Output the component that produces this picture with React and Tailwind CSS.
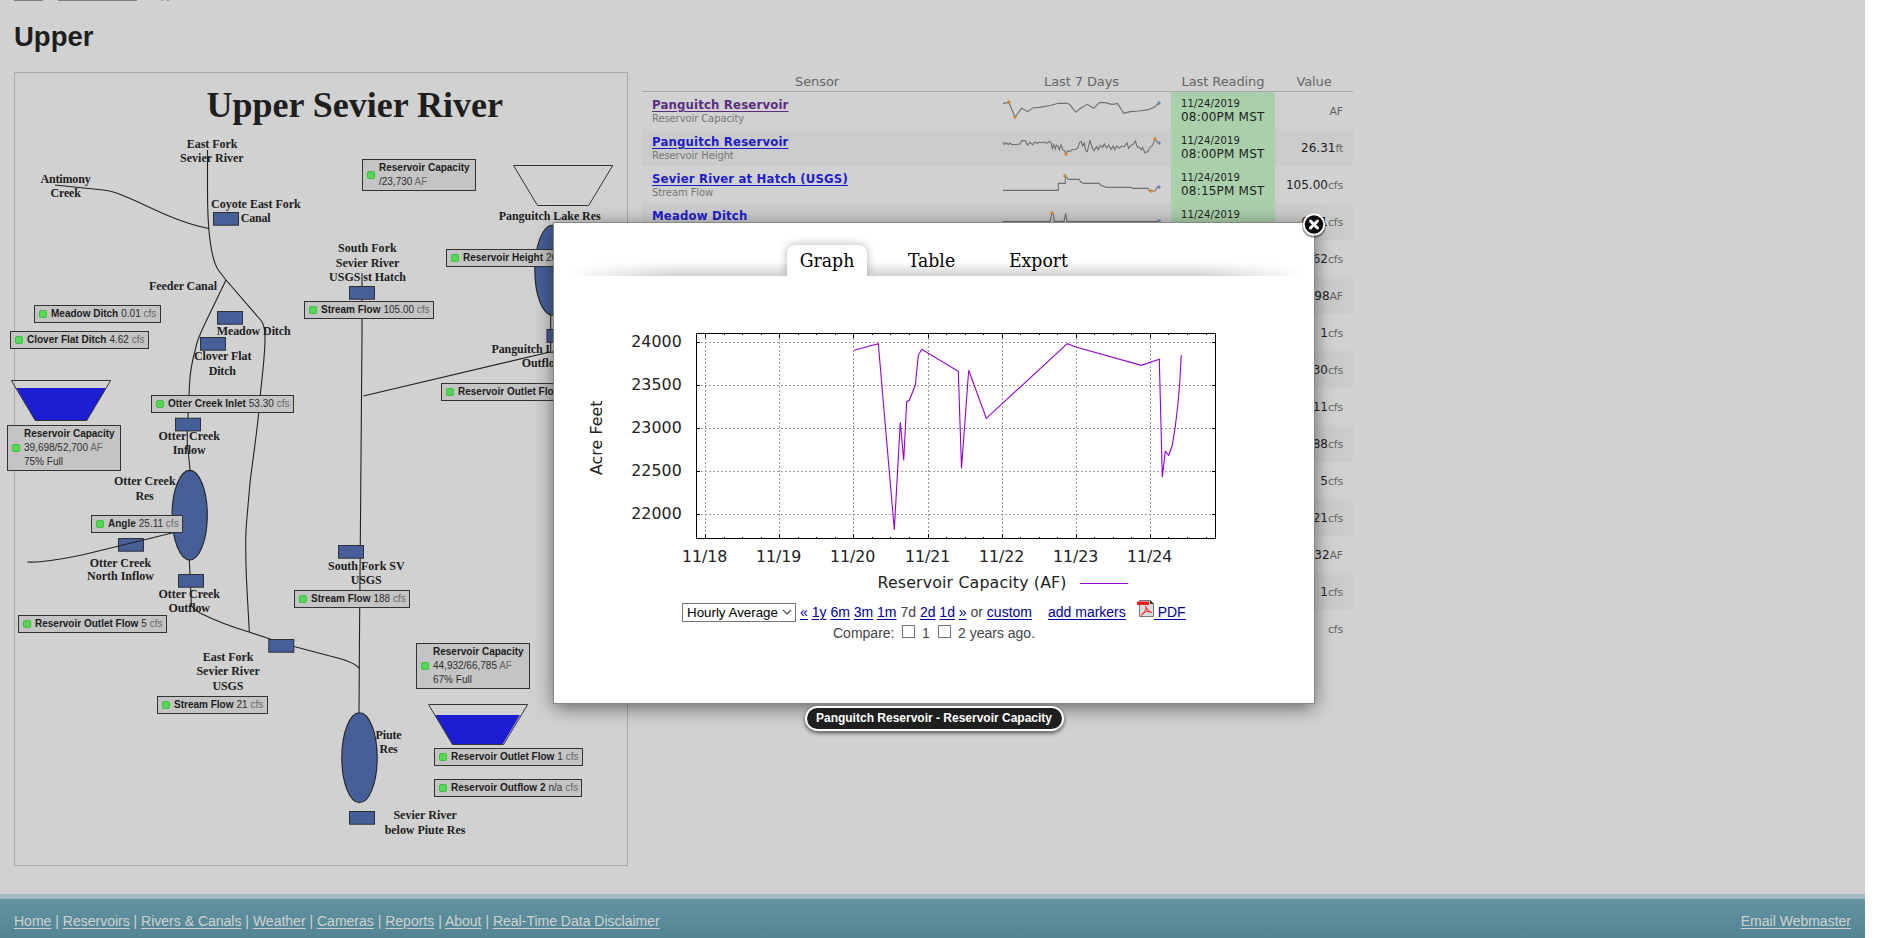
import React from 'react';

const MAP_TEXTS = [
  ['East Fork', 187, 148, 50.7], ['Sevier River', 180.3, 162.3, 63.7],
  ['Antimony', 40.7, 183, 50.3], ['Creek', 50.7, 197.3, 30.6],
  ['Coyote East Fork', 211.4, 207.6, 89.6], ['Canal', 241, 222, 30],
  ['Feeder Canal', 149.3, 290.3, 68], ['Meadow Ditch', 217, 335, 74],
  ['Clover Flat', 194.3, 360.4, 57.4], ['Ditch', 209, 375, 27.3],
  ['Otter Creek', 158.7, 439.5, 61.6], ['Inflow', 173, 453.7, 33],
  ['Otter Creek', 114.3, 485.3, 61.6], ['Res', 135.7, 499.7, 18.3],
  ['Otter Creek', 90, 566.7, 61.6], ['North Inflow', 87.3, 580, 67],
  ['Otter Creek', 158.7, 597.5, 61.6], ['Outflow', 168.7, 611.5, 41.6],
  ['East Fork', 203, 660.7, 50.7], ['Sevier River', 196.7, 675, 63.4], ['USGS', 212.7, 689.5, 31],
  ['Panguitch Lake Res', 499, 220.3, 102],
  ['South Fork', 338.3, 252.3, 58.7], ['Sevier River', 336, 267, 63.7],
  ['USGS', 329.3, 281.3, 31.5], ['st Hatch', 363.6, 281.3, 42.6],
  ['Panguitch Lake', 491.7, 352.7, 80], ['Outflow', 522, 367.3, 41.6],
  ['South Fork SV', 328.3, 569.7, 76.7], ['USGS', 351, 584, 31],
  ['Piute', 375.7, 739, 26.3], ['Res', 379.7, 753, 18.3],
  ['Sevier River', 393.7, 819.3, 63.5], ['below Piute Res', 385, 834, 80.7],
];

const GAUGES = [
  [213.5, 212.5], [349.5, 286.5], [217.5, 311.5], [200.5, 337.5], [175.5, 418.2], [118.5, 538.5],
  [178.5, 574.5], [268.8, 639.5], [338.5, 545.5], [349.5, 811.5], [547, 329.5],
];

// x and y are page coordinates; MapLabel shifts them to the panel's inner corner
const LABELS = [
  { x: 34, y: 305, w: 127, name: 'Meadow Ditch', value: '0.01', unit: 'cfs' },
  { x: 10, y: 331, w: 139, name: 'Clover Flat Ditch', value: '4.62', unit: 'cfs' },
  { x: 151, y: 395, w: 143, name: 'Otter Creek Inlet', value: '53.30', unit: 'cfs' },
  { x: 7, y: 425, w: 114, h: 46, name: 'Reservoir Capacity', value: '39,698/52,700', unit: 'AF', full: '75% Full' },
  { x: 91, y: 515, w: 92, name: 'Angle', value: '25.11', unit: 'cfs' },
  { x: 18, y: 615, w: 149, name: 'Reservoir Outlet Flow', value: '5', unit: 'cfs' },
  { x: 157, y: 696, w: 111, name: 'Stream Flow', value: '21', unit: 'cfs' },
  { x: 362, y: 159, w: 114, h: 32, name: 'Reservoir Capacity', value: '/23,730', unit: 'AF' },
  { x: 304, y: 301, w: 130, name: 'Stream Flow', value: '105.00', unit: 'cfs' },
  { x: 446, y: 249, w: 138, name: 'Reservoir Height', value: '26.31', unit: 'ft' },
  { x: 441, y: 383, w: 149, name: 'Reservoir Outlet Flow', value: '1', unit: 'cfs' },
  { x: 294, y: 590, w: 116, name: 'Stream Flow', value: '188', unit: 'cfs' },
  { x: 416, y: 643, w: 114, h: 46, name: 'Reservoir Capacity', value: '44,932/66,785', unit: 'AF', full: '67% Full' },
  { x: 434, y: 748, w: 149, name: 'Reservoir Outlet Flow', value: '1', unit: 'cfs' },
  { x: 434, y: 779, w: 148, name: 'Reservoir Outflow 2', value: 'n/a', unit: 'cfs' },
];

function MapLabel({ x, y, w, h = 18, name, value, unit, full }) {
  const stacked = h > 18;
  return (
    <div
      className="absolute flex items-center border border-[#333] bg-[#c4c4c4] pl-1 font-['Liberation_Sans',sans-serif] text-[10px] leading-[14px] whitespace-nowrap text-[#2c2c2c]"
      style={{ left: x - 15, top: y - 73, width: w, height: h }}
    >
      <span className="mr-1 h-2 w-2 shrink-0 rounded-[2px] border border-[#3cc040] bg-[#55d858]" />
      <div className={stacked ? 'flex flex-col' : 'flex gap-[3px]'}>
        <b className="text-[#1c1c1c]">{name}</b>
        <span>{value} <span className="text-[#686868]">{unit}</span></span>
        {full && <span>{full}</span>}
      </div>
    </div>
  );
}

function RiverMap() {
  return (
    <div className="relative h-[794px] w-[614px] shrink-0 border border-[#a9a9a9]">
      <svg className="absolute -top-px -left-px overflow-visible" width="614" height="794" viewBox="14 72 614 794">
        <g fill="none" stroke="#222" strokeWidth="1.1">
          <path d="M207.5 150V190C207.5 210 209 235 211 247C213 259 216 267 219 271L226 280L261 320.5Q265 325 265 338C265 362 260 390 258.7 413C256 440 252 465 250 483L246.5 523C245.5 535 245.5 555 246.5 580L249.3 632" />
          <path d="M226 280L206.7 320Q197 340 196 347Q190 368 189.5 385L188 417Q187 432 187.3 447Q189 456 190 470" />
          <path d="M189.3 560L190 574L191.3 605Q193 609 200 613Q222 624 249 632L270 639L295 646.7L330 656Q355 662 359.5 668.5" />
          <path d="M55 185L103.3 190Q113 191 124 196C145 204 175 222 209 228.5" />
          <path d="M362 273V337L361.3 420L360.5 520L359.5 633L359 713" />
          <path d="M363.3 396L550 352M550.7 315V352" />
        </g>
        {GAUGES.map(([x, y]) => (
          <rect key={`${x}-${y}`} x={x} y={y} width="25" height="12.7" fill="#475f99" stroke="#2c3038" />
        ))}
        <g fill="#475f99" stroke="#222" strokeWidth="1.1">
          <ellipse cx="189.7" cy="515.2" rx="17.6" ry="44.8" />
          <ellipse cx="359.5" cy="757.8" rx="17.7" ry="45" />
          <ellipse cx="552.5" cy="270.2" rx="17.7" ry="45" />
        </g>
        <path d="M27.3 562Q43 563 83 554.7L118 546.3L173 532.7" fill="none" stroke="#222" strokeWidth="1.1" />
        <path d="M16.3 388H106L87 420.5H35Z" fill="#1d1dd2" />
        <path d="M435 715H520L502.5 744.5H452.5Z" fill="#1d1dd2" />
        <g fill="none" stroke="#333" strokeWidth="1">
          <path d="M11.3 380.5H110.7L86.7 420.5H35.3Z" />
          <path d="M513.5 165.5H612.7L588.7 205.5H537.5Z" />
          <path d="M428.5 704.5H527.7L503.5 744.5H452.5Z" />
        </g>
        <g className="font-['Liberation_Serif',serif] font-bold" fill="#1e1e1e">
          <text x="206.5" y="117" fontSize="36" textLength="296.5">Upper Sevier River</text>
          {MAP_TEXTS.map(([t, x, y, w]) => (
            <text key={`${t}-${x}-${y}`} x={x - 0.3} y={y} fontSize="12" textLength={w}>{t}</text>
          ))}
        </g>
      </svg>
      {LABELS.map((l) => <MapLabel key={`${l.x}-${l.y}`} {...l} />)}
    </div>
  );
}

const SPARKS = [
  {
    box: '69 96 471 111',
    line: '69,130 82,128 86,126 105,171 125,145 143,155 160,143 178,142 213,136 235,130 258,130 269,133 287,157 303,144 322,133 341,145 358,128 377,128 395,133 413,131 431,160 450,155 478,153 505,149 525,140 537,129',
    hot: [[87, 126], [105, 171]],
    end: [537, 129],
  },
  {
    box: '69 207 471 111',
    line: '69,247 74,253 79,248 85,254 90,249 96,254 112,253 120,252 126,242 136,242 142,255 150,247 158,254 165,246 172,250 178,246 186,248 194,246 200,250 209,244 214,250 217,266 221,254 226,267 229,255 234,258 238,270 243,254 248,268 253,272 258,281 263,272 270,275 276,269 287,268 293,265 299,247 304,244 308,258 313,249 317,272 322,275 330,240 336,262 342,272 350,260 355,269 361,256 368,262 373,252 380,264 386,255 393,268 400,258 404,269 410,258 418,264 425,258 433,260 441,249 446,265 453,256 460,252 466,243 472,261 478,262 484,270 488,262 495,279 504,274 510,262 517,257 525,237 530,245 537,249',
    hot: [[258, 282], [525, 237]],
    end: [537, 249],
  },
  {
    box: '69 318 471 111',
    line: '69,391 235,391 235,370 256,370 256,348 265,358 298,358 302,366 312,370 358,370 362,376 378,382 452,382 458,385 504,385 508,393 525,393 530,383 537,381',
    hot: [[255, 348], [513, 393]],
    end: [537, 381],
  },
  {
    box: '69 429 471 111',
    line: '69,485 210,485 216,459 220,461 223,485 252,485 257,460 261,485 537,485',
    hot: [[216, 459]],
    end: [537, 483],
  },
];

function Spark({ data }) {
  return (
    <svg width="157" height="37" viewBox={data.box} className="overflow-visible">
      <polyline points={data.line} fill="none" stroke="#707070" strokeWidth="3.3" />
      {data.hot.map(([x, y]) => <circle key={x} cx={x} cy={y} r="5" fill="#d9822b" />)}
      <circle cx={data.end[0]} cy={data.end[1]} r="5" fill="#6f86ad" />
    </svg>
  );
}

const ROWS = [
  ['Panguitch Reservoir', 'Reservoir Capacity', '08:00PM MST', '', 'AF'],
  ['Panguitch Reservoir', 'Reservoir Height', '08:00PM MST', '26.31', 'ft'],
  ['Sevier River at Hatch (USGS)', 'Stream Flow', '08:15PM MST', '105.00', 'cfs'],
  ['Meadow Ditch', 'Stream Flow', '08:00PM MST', '0.01', 'cfs'],
  ['Clover Flat Ditch', 'Stream Flow', '08:00PM MST', '4.62', 'cfs'],
  ['Otter Creek Reservoir', 'Reservoir Capacity', '08:00PM MST', '39,698', 'AF'],
  ['Otter Creek Reservoir', 'Outlet Flow', '08:00PM MST', '1', 'cfs'],
  ['Otter Creek Inlet', 'Stream Flow', '08:00PM MST', '53.30', 'cfs'],
  ['Otter Creek North', 'Angle', '08:00PM MST', '25.11', 'cfs'],
  ['South Fork Sevier', 'Stream Flow', '08:00PM MST', '188', 'cfs'],
  ['Otter Creek Outflow', 'Outlet Flow', '08:00PM MST', '5', 'cfs'],
  ['East Fork Sevier', 'Stream Flow', '08:00PM MST', '21', 'cfs'],
  ['Piute Reservoir', 'Reservoir Capacity', '08:00PM MST', '44,932', 'AF'],
  ['Piute Reservoir', 'Outlet Flow', '08:00PM MST', '1', 'cfs'],
  ['Piute Reservoir', 'Outflow 2', '', '', 'cfs'],
];

function SensorTable() {
  return (
    <div className="ml-[14px] w-[711px] font-['DejaVu_Sans',sans-serif]">
      <div className="grid h-5 grid-cols-[350px_179px_104px_78px] border-b border-[#a8a8a8] text-center text-[13px] leading-5 tracking-[-0.1px] text-[#666]">
        <span>Sensor</span>
        <span>Last 7 Days</span>
        <span>Last Reading</span>
        <span>Value</span>
      </div>
      {ROWS.map(([name, sub, time, value, unit], i) => (
        <div
          key={i}
          className={`grid h-[37px] grid-cols-[350px_179px_104px_78px] ${i % 2 ? 'bg-[#cbcbcb]' : ''}`}
        >
          <div className="flex flex-col items-start pt-1 pl-[10px]">
            <a className={`font-['DejaVu_Sans_Condensed','DejaVu_Sans',sans-serif] text-[13px] leading-[17px] font-bold tracking-[0.18px] underline underline-offset-2 ${i ? 'text-[#1d1dc9]' : 'text-[#5b2d82]'}`}>
              {name}
            </a>
            <span className="text-[10px] leading-3 tracking-[-0.1px] text-[#777]">{sub}</span>
          </div>
          <div className="pl-[11px]">{SPARKS[i] && <Spark data={SPARKS[i]} />}</div>
          <div className="flex flex-col bg-[#aacfab] pt-[6px] pl-[10px] whitespace-nowrap text-[#1e1e1e]">
            <span className="text-[10px] leading-3 tracking-[0.15px]">11/24/2019</span>
            <span className="text-[12px] leading-[15px] tracking-[0.2px]">{time}</span>
          </div>
          <div className="pr-[10px] text-right text-[12px] leading-[38px] text-[#1e1e1e]">
            {value}<span className="text-[11px] tracking-[-0.2px] text-[#666]">{unit}</span>
          </div>
        </div>
      ))}
    </div>
  );
}

const X_DAYS = [[705.5, '11/18'], [779.5, '11/19'], [853.5, '11/20'], [928.5, '11/21'], [1002.5, '11/22'], [1076.5, '11/23'], [1150.5, '11/24']];
const Y_TICKS = [[342.5, '24000'], [385.5, '23500'], [428.5, '23000'], [471.5, '22500'], [514.5, '22000']];
const MINOR = [724.5, 742.5, 761.5, 798.5, 816.5, 835.5, 872.5, 890.5, 909.5, 946.5, 965.5, 983.5, 1020.5, 1039.5, 1057.5, 1094.5, 1113.5, 1131.5, 1168.5, 1187.5, 1206.5];
const SERIES = '854,350.3 878.3,343.7 894.3,529.7 900.3,422.3 903.7,460.3 906.7,401.7 909.3,400.3 915.3,385.3 918.3,355.3 921.7,349.3 958.3,371.3 961.5,468.3 968.7,370.3 986.3,418.3 1067.3,343.7 1075,346.7 1141.3,365.3 1159.3,359.3 1162.3,477.3 1165.3,451.3 1168.7,455.3 1172.3,445.3 1175.3,426.7 1178.3,400.3 1179.7,383.3 1181.3,355';

function CapacityChart() {
  return (
    <svg className="block" width="760" height="326" viewBox="554 276 760 326">
      <g stroke="#999" strokeDasharray="2 2" shapeRendering="crispEdges">
        {X_DAYS.map(([x]) => <path key={x} d={`M${x} 334V538`} />)}
        {Y_TICKS.map(([y]) => <path key={y} d={`M697 ${y}H1215`} />)}
      </g>
      <g stroke="#000" fill="none" shapeRendering="crispEdges">
        {X_DAYS.map(([x]) => <path key={x} d={`M${x} 334v4M${x} 538v-4`} />)}
        {MINOR.map((x) => <path key={x} d={`M${x} 334v1M${x} 538v-1`} />)}
        {Y_TICKS.map(([y]) => <path key={y} d={`M697 ${y}h3M1215 ${y}h-3`} />)}
        <rect x="696.5" y="333.5" width="519" height="205" />
      </g>
      <polyline points={SERIES} fill="none" stroke="#9400d3" strokeWidth="1.1" />
      <path d="M1080 583.5H1128" stroke="#9400d3" />
      <g className="font-['DejaVu_Sans',sans-serif]" fontSize="15.8" fill="#222">
        {Y_TICKS.map(([y, t]) => <text key={t} x="631.2" y={y + 4.3} textLength="50.5">{t}</text>)}
        {X_DAYS.map(([x, t]) => <text key={t} x={x - 23.6} y="562.3" textLength="45.5">{t}</text>)}
        <text x="877.5" y="588.3" textLength="189">Reservoir Capacity (AF)</text>
        <text transform="translate(602.3 475) rotate(-90)" textLength="74.5">Acre Feet</text>
      </g>
    </svg>
  );
}

function PdfIcon() {
  return (
    <svg className="-mt-[2px] shrink-0" width="17" height="17" viewBox="0 0 17 17">
      <path d="M2.5 .5H13L16.5 4V16.500H2.5Z" fill="#ddd" stroke="#777" />
      <path d="M13 0V4H17Z" fill="#333" />
      <path d="M0 1.5H12V5H0Z" fill="#ee1c24" />
      <path d="M8.5 6C9.500 9 11 12 15 12.5M9.3 7C9 10 7 13.5 4 15.5M5.5 13C8 11.7 12 11 15 12.5" fill="none" stroke="#e33" strokeWidth="1.1" />
    </svg>
  );
}

function Link({ children }) {
  return <a className="text-[#009] underline underline-offset-2">{children}</a>;
}

function GraphDialog() {
  return (
    <div className="absolute top-[223px] left-[554px] h-[480px] w-[760px] bg-white shadow-[0_0_0_1px_#888,0_4px_18px_rgba(0,0,0,0.55)]">
      <div className="relative flex h-[53px] items-end overflow-hidden pl-[233px] font-['DejaVu_Serif_Condensed','DejaVu_Serif',serif] text-[19.2px] leading-[31px] text-black">
        <div className="absolute right-[10px] bottom-0 left-[14px] h-[14px] bg-linear-to-t from-black/18 to-transparent [mask-image:linear-gradient(to_right,transparent,black_14%,black_86%,transparent)]" />
        <div className="relative h-[31px] w-20 rounded-t-lg bg-white text-center shadow-[0_0_10px_rgba(0,0,0,0.3)]">Graph</div>
        <div className="relative ml-[41px] w-[101px]">Table</div>
        <div className="relative">Export</div>
      </div>
      <CapacityChart />
      <div className="flex pl-[128px] font-['Liberation_Sans',sans-serif] text-[14px] leading-5 whitespace-nowrap text-[#444]">
        <div className="mt-px mr-1 flex h-[19px] w-[114px] items-center border border-[#767676] pl-1 text-[13.33px] text-black">
          <span className="w-[95px]">Hourly Average</span>
          <svg width="10" height="7" viewBox="0 0 10 7"><path d="M1 1L5 5L9 1" fill="none" stroke="#666" strokeWidth="1.5" /></svg>
        </div>
        <div>
          <Link>«</Link> <Link>1y</Link> <Link>6m</Link> <Link>3m</Link> <Link>1m</Link> 7d <Link>2d</Link> <Link>1d</Link> <Link>»</Link> or <Link>custom</Link>
        </div>
        <div className="ml-4"><Link>add markers</Link></div>
        <div className="ml-[11px] flex"><PdfIcon /><a className="whitespace-pre text-[#009] underline underline-offset-2"> PDF</a></div>
      </div>
      <div className="flex pt-px pl-[279px] font-['Liberation_Sans',sans-serif] text-[14px] leading-[21px] whitespace-nowrap text-[#444]">
        <span className="w-[69px]">Compare:</span>
        <span className="mt-[2px] h-[13px] w-[13px] border border-[#767676]" />
        <span className="ml-[7px] w-[16px]">1</span>
        <span className="mt-[2px] h-[13px] w-[13px] border border-[#767676]" />
        <span className="ml-[7px]">2 years ago.</span>
      </div>
      <svg className="absolute -top-[12px] -right-[14px] overflow-visible" width="28" height="28" viewBox="-14 -14 28 28">
        <circle cy="1" r="12" fill="#000" opacity=".35" />
        <circle cy="-.5" r="11" fill="#fff" />
        <circle cy="-.5" r="9.3" fill="#0a0a0a" />
        <path d="M-3.5 -4L3.5 3M3.5 -4L-3.5 3" stroke="#fff" strokeWidth="3" strokeLinecap="round" />
      </svg>
    </div>
  );
}

const FOOTER = ['Home', 'Reservoirs', 'Rivers & Canals', 'Weather', 'Cameras', 'Reports', 'About', 'Real-Time Data Disclaimer'];

export default function App() {
  return (
    <div className="relative h-[938px] overflow-hidden bg-white font-['Liberation_Sans',sans-serif]">
      <div className="flex h-full w-[1865px] flex-col bg-[#d1d1d1]">
        <div className="flex h-px shrink-0 pl-[14px]">
          <div className="mr-[15px] w-[29px] bg-[#808080]" />
          <div className="mr-6 w-[79px] bg-[#808080]" />
          <div className="mr-1 w-[2px] bg-[#999]" />
          <div className="w-[2px] bg-[#999]" />
        </div>
        <h1 className="h-[71px] shrink-0 pt-5 pl-[14px] text-[27.5px] leading-8 font-bold text-[#1e1e1e]">Upper</h1>
        <div className="flex h-[822px] shrink-0 pl-[14px]">
          <RiverMap />
          <SensorTable />
        </div>
        <footer className="flex flex-1 justify-between border-t-[5px] border-[#a3bcc2] bg-linear-to-b from-[#6394a2] to-[#528494] px-[14px] pt-3 text-[14px] leading-5 text-[#d1d1d1]">
          <div>
            {FOOTER.map((t, i) => (
              <React.Fragment key={t}>{i > 0 && ' | '}<a className="underline underline-offset-2">{t}</a></React.Fragment>
            ))}
          </div>
          <a className="underline underline-offset-2">Email Webmaster</a>
        </footer>
      </div>
      <GraphDialog />
      <div className="absolute top-[706px] left-[805px] flex h-[25px] w-[259px] items-center justify-center rounded-full border-2 border-white bg-[#1f1f1f] pr-px pb-[2px] text-[12px] leading-none font-bold whitespace-nowrap text-white shadow-[0_2px_4px_rgba(0,0,0,0.6)]">
        Panguitch Reservoir - Reservoir Capacity
      </div>
    </div>
  );
}
